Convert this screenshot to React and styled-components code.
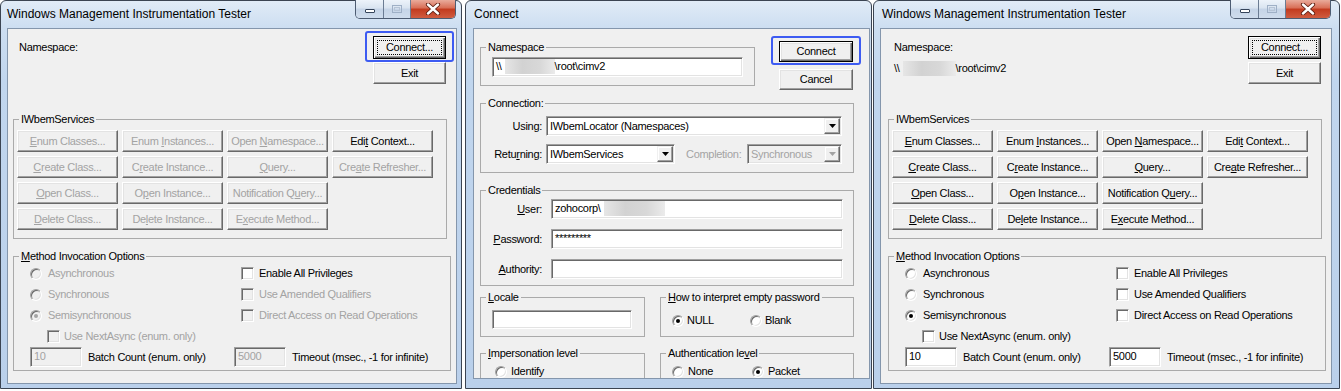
import React from 'react';
import styled, { createGlobalStyle, css } from 'styled-components';

const GlobalStyle = createGlobalStyle`
  body {
    margin: 0;
    background: #fff;
  }
  * {
    box-sizing: border-box;
  }
`;

const GREY_TEXT = '#a3a3a3';

const Desktop = styled.div`
  display: flex;
  align-items: flex-start;
  width: 1341px;
  height: 391px;
  overflow: hidden;
  font-family: "Liberation Sans", Arial, sans-serif;
  font-size: 11px;
  line-height: 13px;
  letter-spacing: -0.3px;
  color: #000;
`;

/* ---------- window chrome ---------- */

const Frame = styled.div`
  flex: none;
  width: ${p => p.$w}px;
  height: 389px;
  margin-left: ${p => p.$ml || 0}px;
  border: 1px solid #3b4452;
  border-radius: 6px 6px 0 0;
  background: linear-gradient(180deg, #e1ebf7 0, #cddef1 26px, #c1d6ee 80px, #bad0eb 100%);
  display: flex;
  flex-direction: column;
  padding: 0 ${p => p.$pr}px ${p => p.$pb}px ${p => p.$pl}px;
`;

const TitleBar = styled.div`
  flex: none;
  height: 27px;
  display: flex;
  align-items: flex-start;
  justify-content: space-between;
`;

const Title = styled.div`
  padding-top: 6px;
  margin-left: ${p => p.$indent || 0}px;
  font-size: 12px;
  line-height: 14px;
  letter-spacing: 0;
  color: #000;
`;

const CaptionButtons = styled.div`
  display: flex;
  height: 19px;
  margin-top: -1px;
  margin-right: 1px;
  border: 1px solid #4d5c72;
  border-top: none;
  border-radius: 0 0 5px 5px;
  overflow: hidden;
`;

const CaptionButton = styled.div`
  width: ${p => p.$w}px;
  height: 100%;
  display: flex;
  align-items: center;
  justify-content: center;
  background: ${p => p.$close
    ? 'linear-gradient(180deg, #e9ab9b 0, #d86d55 45%, #c23a1e 50%, #d05c40 100%)'
    : 'linear-gradient(180deg, #edf3fa 0, #d9e4f0 45%, #c5d4e7 50%, #cfdcec 100%)'};
  & + & {
    border-left: 1px solid #6b7c93;
  }
`;

const Client = styled.div`
  flex: 1;
  position: relative;
  overflow: hidden;
  border: 1px solid #8496ac;
  background: #f0f0f0;
`;

const WindowFrame = ({ width, ml, pl, pr, pb, title, titleIndent, caption, children }) => (
  <Frame $w={width} $ml={ml} $pl={pl} $pr={pr} $pb={pb}>
    <TitleBar>
      <Title $indent={titleIndent}>{title}</Title>
      {caption && (
        <CaptionButtons>
          <CaptionButton $w={27}>
            <svg width="12" height="10" viewBox="0 0 12 10">
              <rect x="1.5" y="5.5" width="9" height="3" rx="0.5" fill="#fff" stroke="#35445a" />
            </svg>
          </CaptionButton>
          <CaptionButton $w={27}>
            <svg width="12" height="10" viewBox="0 0 12 10">
              <rect x="1.5" y="1.5" width="9" height="7" fill="none" stroke="#9fb0c6" />
              <rect x="3.5" y="3.5" width="5" height="3" fill="none" stroke="#b6c4d6" />
            </svg>
          </CaptionButton>
          <CaptionButton $w={45} $close>
            <svg width="16" height="12" viewBox="0 0 16 12">
              <path d="M3 1.5 L13 10.5 M13 1.5 L3 10.5" stroke="#5e1f12" strokeWidth="4.2" strokeLinecap="round" />
              <path d="M3 1.5 L13 10.5 M13 1.5 L3 10.5" stroke="#fff" strokeWidth="2.4" strokeLinecap="round" />
            </svg>
          </CaptionButton>
        </CaptionButtons>
      )}
    </TitleBar>
    <Client>{children}</Client>
  </Frame>
);

/* ---------- classic controls ---------- */

const Key = styled.span`
  text-decoration: underline;
  text-underline-offset: 1px;
`;

// "&Enum Classes..." -> E underlined, like a Win32 resource string.
// Wrapped in a span so flex parents don't trim the spaces round the key.
const Mnemonic = ({ text }) => {
  const i = text.indexOf('&');
  if (i < 0) return <span>{text}</span>;
  return (
    <span>
      {text.slice(0, i)}
      <Key>{text[i + 1]}</Key>
      {text.slice(i + 2)}
    </span>
  );
};

const Btn = styled.div`
  position: relative;
  display: flex;
  align-items: center;
  justify-content: center;
  width: ${p => (p.$w ? `${p.$w}px` : 'auto')};
  height: ${p => p.$h || 22}px;
  background: #f0f0f0;
  border: 1px solid;
  border-color: #fff #696969 #696969 #fff;
  box-shadow: inset -1px -1px #a0a0a0, inset 1px 1px #e3e3e3;
  color: ${p => (p.$disabled ? GREY_TEXT : '#000')};
  white-space: nowrap;

  ${p => p.$default && css`
    border-color: #000;
    box-shadow: inset 1px 1px #fff, inset -1px -1px #696969, inset -2px -2px #a0a0a0, inset 2px 2px #e3e3e3;
  `}

  ${p => p.$focus && css`
    &::after {
      content: '';
      position: absolute;
      inset: 3px;
      border: 1px dotted #000;
    }
  `}
`;

// blue marker the screenshot author drew round a button
const Highlight = styled.div`
  position: relative;
  &::before {
    content: '';
    position: absolute;
    inset: -5px -8px -3px -8px;
    border: 2px solid #3d5bf2;
    border-radius: 3px;
    pointer-events: none;
  }
`;

const Edit = styled.div`
  flex: none;
  display: flex;
  align-items: center;
  width: ${p => p.$w}px;
  height: ${p => p.$h || 20}px;
  padding: 0 0 1px 3px;
  border: 1px solid;
  border-color: #a0a0a0 #fff #fff #a0a0a0;
  box-shadow: inset 1px 1px #696969, inset -1px -1px #e3e3e3;
  background: ${p => (p.$disabled ? '#f0f0f0' : '#fff')};
  color: ${p => (p.$disabled ? GREY_TEXT : '#000')};
  white-space: nowrap;
  overflow: hidden;
`;

const Blur = styled.span`
  display: inline-block;
  width: ${p => p.$w}px;
  height: 15px;
  margin-left: 3px;
  background: linear-gradient(90deg, #e6e6e6 0, #d2d2d2 35%, #d8d8d8 70%, #ebebeb 100%);
`;

const Combo = styled.div`
  flex: none;
  display: flex;
  align-items: stretch;
  width: ${p => p.$w}px;
  height: 20px;
  padding: 1px;
  margin-left: ${p => p.$ml || 0}px;
  border: 1px solid;
  border-color: #a0a0a0 #fff #fff #a0a0a0;
  box-shadow: inset 1px 1px #696969, inset -1px -1px #e3e3e3;
  background: ${p => (p.$disabled ? '#f0f0f0' : '#fff')};
  color: ${p => (p.$disabled ? GREY_TEXT : '#000')};
`;

const ComboText = styled.span`
  flex: 1;
  display: flex;
  align-items: center;
  padding-left: 2px;
  white-space: nowrap;
  overflow: hidden;
`;

const DropButton = styled.span`
  flex: none;
  width: 16px;
  display: flex;
  align-items: center;
  justify-content: center;
  background: #f0f0f0;
  border: 1px solid;
  border-color: #f0f0f0 #696969 #696969 #f0f0f0;
  box-shadow: inset -1px -1px #a0a0a0, inset 1px 1px #fff;
`;

const ComboBox = ({ w, ml, disabled, children }) => (
  <Combo $w={w} $ml={ml} $disabled={disabled}>
    <ComboText>{children}</ComboText>
    <DropButton>
      <svg width="7" height="4" viewBox="0 0 7 4">
        <polygon points="0,0 7,0 3.5,4" fill={disabled ? GREY_TEXT : '#000'} />
      </svg>
    </DropButton>
  </Combo>
);

const CheckBox = styled.span`
  flex: none;
  width: 13px;
  height: 13px;
  border: 1px solid;
  border-color: #a0a0a0 #fff #fff #a0a0a0;
  box-shadow: inset 1px 1px #696969, inset -1px -1px #e3e3e3;
  background: ${p => (p.$disabled ? '#f0f0f0' : '#fff')};
`;

const RadioDot = styled.span`
  flex: none;
  position: relative;
  width: 12px;
  height: 12px;
  border-radius: 50%;
  border: 1px solid;
  border-color: #a0a0a0 #fff #fff #a0a0a0;
  box-shadow: inset 1px 1px #696969, inset -1px -1px #e3e3e3;
  background: ${p => (p.$disabled ? '#f0f0f0' : '#fff')};

  ${p => p.$checked && css`
    &::after {
      content: '';
      position: absolute;
      left: 3px;
      top: 3px;
      width: 4px;
      height: 4px;
      border-radius: 50%;
      background: ${p.$disabled ? GREY_TEXT : '#000'};
    }
  `}
`;

const OptionLabel = styled.label`
  display: flex;
  align-items: center;
  gap: ${p => p.$gap ?? 5}px;
  padding-left: ${p => p.$indent || 0}px;
  color: ${p => (p.$disabled ? GREY_TEXT : '#000')};
  white-space: nowrap;
`;

const Radio = ({ checked, disabled, gap, indent, children }) => (
  <OptionLabel $gap={gap} $indent={indent} $disabled={disabled}>
    <RadioDot $checked={checked} $disabled={disabled} />
    <span>{children}</span>
  </OptionLabel>
);

const Check = ({ disabled, gap, indent, children }) => (
  <OptionLabel $gap={gap} $indent={indent} $disabled={disabled}>
    <CheckBox $disabled={disabled} />
    <span>{children}</span>
  </OptionLabel>
);

const Group = styled.fieldset`
  flex: none;
  margin: ${p => p.$mt || 0}px 0 0;
  padding: 0;
  width: ${p => p.$w}px;
  min-width: 0;
  border: 1px solid #aaaaaa;
`;

const Legend = styled.legend`
  margin-left: 5px;
  padding: 0 2px;
  line-height: 13px;
`;

/* ---------- WMI tester main window ---------- */

const serviceButtons = [
  { label: '&Enum Classes...' },
  { label: 'Enum &Instances...' },
  { label: 'Open &Namespace...' },
  { label: 'Edi&t Context...', always: true },
  { label: '&Create Class...' },
  { label: 'C&reate Instance...' },
  { label: '&Query...' },
  { label: 'Cre&ate Refresher...' },
  { label: '&Open Class...' },
  { label: 'O&pen Instance...' },
  { label: 'Notification Q&uery...' },
  null,
  { label: '&Delete Class...' },
  { label: 'De&lete Instance...' },
  { label: 'E&xecute Method...' },
];

const TesterBody = styled.div`
  padding-left: ${p => p.$inset}px;
`;

const Header = styled.div`
  display: flex;
  justify-content: space-between;
  align-items: flex-start;
  height: 84px;
  padding: 7px 10px 0 6px;
`;

const NameBlock = styled.div`
  display: flex;
  flex-direction: column;
  gap: 8px;
  padding-top: 5px;
`;

const PathText = styled.div`
  display: flex;
  align-items: center;
  height: 13px;
  white-space: nowrap;
`;

const ButtonStack = styled.div`
  display: flex;
  flex-direction: column;
  gap: ${p => p.$gap}px;
`;

const ButtonGrid = styled.div`
  display: grid;
  grid-template-columns: repeat(4, 101px);
  grid-auto-rows: 22px;
  gap: 4px;
  padding: 4px 0 8px 3px;
`;

const OptionsGrid = styled.div`
  display: grid;
  grid-template-columns: 204px 1fr;
  grid-template-rows: repeat(4, 21px) 20px;
  padding: 0 0 3px 16px;
`;

const EditWithLabel = styled.div`
  display: flex;
  align-items: center;
  gap: 6px;
  white-space: nowrap;
`;

const Tester = ({ connected }) => {
  const off = !connected;
  const connectBtn = (
    <Btn $w={73} $h={23} $default $focus>Connect...</Btn>
  );
  return (
    <TesterBody $inset={connected ? 7 : 5}>
      <Header>
        <NameBlock>
          <span>Namespace:</span>
          {connected && (
            <PathText>
              {'\\\\'}
              <Blur $w={53} />
              {'\\root\\cimv2'}
            </PathText>
          )}
        </NameBlock>
        <ButtonStack $gap={3}>
          {connected ? connectBtn : <Highlight>{connectBtn}</Highlight>}
          <Btn $w={73} $h={22}>Exit</Btn>
        </ButtonStack>
      </Header>

      <Group $w={434}>
        <Legend>IWbemServices</Legend>
        <ButtonGrid>
          {serviceButtons.map((b, i) =>
            b ? (
              <Btn key={i} $disabled={off && !b.always}>
                <Mnemonic text={b.label} />
              </Btn>
            ) : (
              <span key={i} />
            )
          )}
        </ButtonGrid>
      </Group>

      <Group $w={438} $mt={11}>
        <Legend><Mnemonic text="&Method Invocation Options" /></Legend>
        <OptionsGrid>
          <Radio disabled={off} gap={6}>Asynchronous</Radio>
          <Check indent={7}>Enable All Privileges</Check>
          <Radio disabled={off} gap={6}>Synchronous</Radio>
          <Check indent={7} disabled={off}>Use Amended Qualifiers</Check>
          <Radio disabled={off} gap={6} checked>Semisynchronous</Radio>
          <Check indent={7} disabled={off}>Direct Access on Read Operations</Check>
          <Check indent={17} gap={4} disabled={off}>Use NextAsync (enum. only)</Check>
          <span />
          <EditWithLabel>
            <Edit $w={52} $disabled={off}>10</Edit>
            <span>Batch Count (enum. only)</span>
          </EditWithLabel>
          <EditWithLabel>
            <Edit $w={52} $disabled={off}>5000</Edit>
            <span>Timeout (msec., -1 for infinite)</span>
          </EditWithLabel>
        </OptionsGrid>
      </Group>
    </TesterBody>
  );
};

/* ---------- Connect dialog ---------- */

const ConnectBody = styled.div`
  padding-left: 6px;
`;

const TopRow = styled.div`
  display: flex;
  align-items: flex-start;
`;

const SideButtons = styled(ButtonStack)`
  margin: 12px 0 0 24px;
`;

const Rows = styled.div`
  display: flex;
  flex-direction: column;
  gap: ${p => p.$gap || 0}px;
  padding: ${p => p.$pad};
`;

const FieldRow = styled.div`
  display: flex;
  align-items: center;
  height: 20px;
`;

const FieldLabel = styled.span`
  flex: none;
  width: 61px;
  margin-right: ${p => p.$mr}px;
  text-align: right;
  white-space: nowrap;
`;

const DimLabel = styled.span`
  flex: none;
  width: 61px;
  margin-left: 11px;
  color: ${GREY_TEXT};
  white-space: nowrap;
`;

const PairRow = styled.div`
  display: flex;
  gap: 15px;
  margin-top: ${p => p.$mt}px;
`;

const RadioRow = styled.div`
  display: grid;
  grid-template-columns: ${p => p.$col}px auto;
  align-items: center;
  height: 21px;
  margin: ${p => p.$margin};
  padding-left: ${p => p.$pl}px;
`;

const ConnectDialog = () => (
  <ConnectBody>
    <TopRow>
      <Group $w={275} $mt={12}>
        <Legend>Namespace</Legend>
        <Rows $pad="3px 0 8px 11px">
          <Edit $w={251}>
            {'\\\\'}
            <Blur $w={50} />
            {'\\root\\cimv2'}
          </Edit>
        </Rows>
      </Group>
      <SideButtons $gap={7}>
        <Highlight>
          <Btn $w={74} $h={21} $default>Connect</Btn>
        </Highlight>
        <Btn $w={74} $h={21}>Cancel</Btn>
      </SideButtons>
    </TopRow>

    <Group $w={374} $mt={7}>
      <Legend>Connection:</Legend>
      <Rows $gap={8} $pad="6px 0 8px 0">
        <FieldRow>
          <FieldLabel $mr={4}>Using:</FieldLabel>
          <ComboBox w={296}>IWbemLocator (Namespaces)</ComboBox>
        </FieldRow>
        <FieldRow>
          <FieldLabel $mr={4}><Mnemonic text="Retu&rning:" /></FieldLabel>
          <ComboBox w={129}>IWbemServices</ComboBox>
          <DimLabel>Completion:</DimLabel>
          <ComboBox w={95} disabled>Synchronous</ComboBox>
        </FieldRow>
      </Rows>
    </Group>

    <Group $w={374} $mt={11}>
      <Legend>Credentials</Legend>
      <Rows $gap={10} $pad="2px 0 6px 0">
        <FieldRow>
          <FieldLabel $mr={9}><Mnemonic text="&User:" /></FieldLabel>
          <Edit $w={292}>
            zohocorp{'\\'}
            <Blur $w={61} />
          </Edit>
        </FieldRow>
        <FieldRow>
          <FieldLabel $mr={9}><Mnemonic text="&Password:" /></FieldLabel>
          <Edit $w={292}>*********</Edit>
        </FieldRow>
        <FieldRow>
          <FieldLabel $mr={9}><Mnemonic text="&Authority:" /></FieldLabel>
          <Edit $w={292} />
        </FieldRow>
      </Rows>
    </Group>

    <PairRow $mt={5}>
      <Group $w={165}>
        <Legend><Mnemonic text="&Locale" /></Legend>
        <Rows $pad="6px 0 7px 11px">
          <Edit $w={140} $h={19} />
        </Rows>
      </Group>
      <Group $w={194}>
        <Legend><Mnemonic text="&How to interpret empty password" /></Legend>
        <RadioRow $col={78} $pl={11} $margin="6px 0 5px">
          <Radio checked gap={3}>NULL</Radio>
          <Radio gap={3}>Blank</Radio>
        </RadioRow>
      </Group>
    </PairRow>

    <PairRow $mt={10}>
      <Group $w={165}>
        <Legend><Mnemonic text="&Impersonation level" /></Legend>
        <RadioRow $col={78} $pl={14} $margin="1px 0 30px">
          <Radio gap={4}>Identify</Radio>
        </RadioRow>
      </Group>
      <Group $w={194}>
        <Legend><Mnemonic text="Authentication le&vel" /></Legend>
        <RadioRow $col={80} $pl={11} $margin="1px 0 30px">
          <Radio gap={4}>None</Radio>
          <Radio checked gap={4}>Packet</Radio>
        </RadioRow>
      </Group>
    </PairRow>
  </ConnectBody>
);

export default function App() {
  return (
    <>
      <GlobalStyle />
      <Desktop>
        <WindowFrame width={462} pl={6} pr={4} pb={4} title="Windows Management Instrumentation Tester" caption>
          <Tester connected={false} />
        </WindowFrame>
        <WindowFrame width={407} ml={3} pl={7} pr={1} pb={9} title="Connect" titleIndent={1}>
          <ConnectDialog />
        </WindowFrame>
        <WindowFrame width={467} ml={1} pl={6} pr={7} pb={4} title="Windows Management Instrumentation Tester" titleIndent={2} caption>
          <Tester connected />
        </WindowFrame>
      </Desktop>
    </>
  );
}
